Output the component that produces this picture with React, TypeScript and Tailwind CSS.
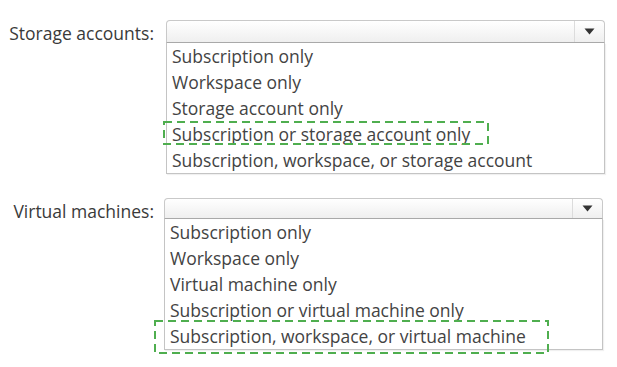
import React from 'react';

type DropProps = {
    label: string;
    options: string[];
    rowClass: string;
    headClass: string;
    boxClass: string;
};

const Arrow = () => (
    <svg width="11" height="7" viewBox="0 0 11 7">
        <path d="M0.5 0.5 L10.5 0.5 L5.5 6.5 Z" fill="#333" />
    </svg>
);

// dashed green highlight drawn over the list
const Highlight = ({ className }: { className: string }) => (
    <div className={`absolute pointer-events-none ${className}`}>
        <svg width="100%" height="100%" className="overflow-visible">
            <rect x="1" y="1" width="calc(100% - 2px)" height="calc(100% - 2px)" fill="none" stroke="#4fae4f" strokeWidth="2" strokeDasharray="8 5" />
        </svg>
    </div>
);

const Dropdown: React.FC<DropProps> = ({ label, options, rowClass, headClass, boxClass }) => (
    <div className={`flex items-start ${rowClass}`}>
        <div className="w-[154px] text-right pt-[2px] text-[#3a3a3a] text-[17.5px] leading-[22px]">{label}</div>
        <div className={boxClass}>
            <div className={`flex border border-[#c9c9c9] border-b-[#a9a9a9] rounded-t-[4px] bg-gradient-to-b from-white to-[#efefef] ${headClass}`}>
                <div className="flex-1" />
                <div className="w-[30px] border-l border-[#dcdcdc] flex items-center justify-center">
                    <Arrow />
                </div>
            </div>
            <div className="border border-t-0 border-[#c4c4c4] bg-white pl-[5px] shadow-[1px_1px_1px_rgba(0,0,0,0.06)]">
                {options.map((o) => (
                    <div key={o} className="h-[26px] leading-[26px] text-[17.5px] text-[#434343]">{o}</div>
                ))}
            </div>
        </div>
    </div>
);

export default function App() {
    return (
        <div className="relative w-[617px] h-[367px] bg-white overflow-hidden" style={{ fontFamily: '"Open Sans", "Noto Sans", sans-serif' }}>
            <div className="flex flex-col pt-[20px]">
                <Dropdown
                    label="Storage accounts:"
                    rowClass=""
                    headClass="h-[23px]"
                    boxClass="ml-[12px] w-[439px]"
                    options={[
                        'Subscription only',
                        'Workspace only',
                        'Storage account only',
                        'Subscription or storage account only',
                        'Subscription, workspace, or storage account',
                    ]}
                />
                <Dropdown
                    label="Virtual machines:"
                    rowClass="mt-[24px]"
                    headClass="h-[21px]"
                    boxClass="ml-[10px] w-[439px]"
                    options={[
                        'Subscription only',
                        'Workspace only',
                        'Virtual machine only',
                        'Subscription or virtual machine only',
                        'Subscription, workspace, or virtual machine',
                    ]}
                />
            </div>
            <Highlight className="left-[163px] top-[121px] w-[326px] h-[24px]" />
            <Highlight className="left-[154px] top-[320px] w-[395px] h-[34px]" />
        </div>
    );
}
